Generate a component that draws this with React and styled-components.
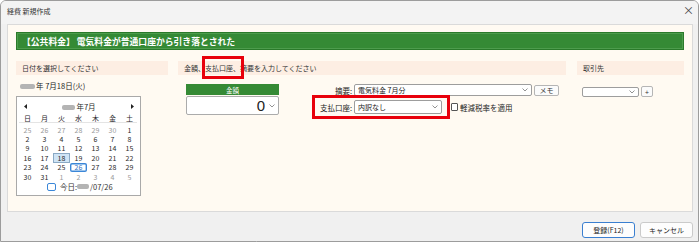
import React from 'react';
import styled, { createGlobalStyle } from 'styled-components';

const GlobalStyle = createGlobalStyle`
  html, body {
    margin: 0;
    padding: 0;
    background: #ffffff;
  }
  body {
    font-family: "Noto Sans CJK JP", "Noto Sans", sans-serif;
    color: #262626;
  }
  * {
    box-sizing: border-box;
  }
`;

const weekdays = ['日', '月', '火', '水', '木', '金', '土'];

const days = [
  [25, 26, 27, 28, 29, 30, 1],
  [2, 3, 4, 5, 6, 7, 8],
  [9, 10, 11, 12, 13, 14, 15],
  [16, 17, 18, 19, 20, 21, 22],
  [23, 24, 25, 26, 27, 28, 29],
  [30, 31, 1, 2, 3, 4, 5],
];

function Chevron() {
  return (
    <svg width="6" height="4" viewBox="0 0 6 4">
      <polyline points="0.5,0.5 3,3 5.5,0.5" fill="none" stroke="#777" strokeWidth="0.8" />
    </svg>
  );
}

function Arrow({ dir }) {
  return (
    <svg width="3" height="5" viewBox="0 0 3 5">
      {dir === 'left' ? <polygon points="3,0 0,2.5 3,5" fill="#222" /> : <polygon points="0,0 3,2.5 0,5" fill="#222" />}
    </svg>
  );
}

function Calendar() {
  return (
    <StCalendar>
      <StCalHead>
        <Arrow dir="left" />
        <span>
          <StBlur $w={13} />年7月
        </span>
        <Arrow dir="right" />
      </StCalHead>
      <StWeekRow>
        {weekdays.map((w) => (
          <StCell key={w}>{w}</StCell>
        ))}
      </StWeekRow>
      <StDays>
        {days.map((row, r) =>
          row.map((d, c) => {
            const other = (r === 0 && d > 20) || (r === 5 && d < 20);
            return (
              <StCell
                key={`${r}-${c}`}
                $muted={other}
                $selected={r === 3 && d === 18}
                $today={r === 4 && d === 26}
              >
                {d}
              </StCell>
            );
          })
        )}
      </StDays>
      <StToday>
        <StTodayMark />
        今日: <StBlur $w={12} />/07/26
      </StToday>
    </StCalendar>
  );
}

function App() {
  return (
    <>
      <GlobalStyle />
      <StWindow>
        <StTitleBar>
          <span>経費 新規作成</span>
          <StClose>×</StClose>
        </StTitleBar>

        <StPanel>
          <StBanner>【公共料金】 電気料金が普通口座から引き落とされた</StBanner>

          <StColumns>
            <StLeftCol>
              <StSection>日付を選択してください</StSection>
              <StDateText>
                <StBlur $w={15} />年 7月18日(火)
              </StDateText>
              <Calendar />
            </StLeftCol>

            <StMidCol>
              <StSection>
                金額、<StMark>支払口座、</StMark>摘要を入力してください
              </StSection>
              <StMidBody>
                <StAmount>
                  <StAmountLabel>金額</StAmountLabel>
                  <StAmountInput>
                    <span>0</span>
                    <Chevron />
                  </StAmountInput>
                </StAmount>

                <StForm>
                  <StRow>
                    <StLabel>摘要:</StLabel>
                    <StSelect $w={178} $h={12}>
                      <span>電気料金 7月分</span>
                      <Chevron />
                    </StSelect>
                    <StSmallButton $w={25}>メモ</StSmallButton>
                  </StRow>
                  <StRow>
                    <StBoxed>
                      <StLabel>支払口座:</StLabel>
                      <StSelect $w={88} $h={14}>
                        <span>内訳なし</span>
                        <Chevron />
                      </StSelect>
                    </StBoxed>
                    <StCheck />
                    <StCheckLabel>軽減税率を適用</StCheckLabel>
                  </StRow>
                </StForm>
              </StMidBody>
            </StMidCol>

            <StRightCol>
              <StSection>取引先</StSection>
              <StPartnerRow>
                <StSelect $w={57} $h={10}>
                  <span />
                  <Chevron />
                </StSelect>
                <StSmallButton $w={12}>+</StSmallButton>
              </StPartnerRow>
            </StRightCol>
          </StColumns>
        </StPanel>

        <StFooter>
          <StButton $primary>登録(F12)</StButton>
          <StButton>キャンセル</StButton>
        </StFooter>
      </StWindow>
    </>
  );
}

export default App;

const StWindow = styled.div`
  width: 699px;
  height: 242px;
  border: 1px solid #9c9c9c;
  border-radius: 6px 6px 0 0;
  background: #f0f0f0;
  display: flex;
  flex-direction: column;
  overflow: hidden;
`;

const StTitleBar = styled.div`
  height: 23px;
  background: #f3f3f3;
  display: flex;
  align-items: center;
  justify-content: space-between;
  padding: 0 4px 4px 6px;
  font-size: 7px;
  color: #333;
`;

const StClose = styled.span`
  font-size: 11px;
  color: #444;
  line-height: 1;
`;

const StPanel = styled.div`
  height: 188px;
  margin: 0 5px 0 6px;
  background: #fffaf2;
  border: 1px solid #dadada;
  padding: 7px 8px 0 8px;
`;

const StBanner = styled.div`
  height: 18px;
  background: #358a35;
  border: 1px solid #2a7a2a;
  box-shadow: inset 0 0 0 1px #4d9c4d;
  color: #ffffff;
  font-size: 8.8px;
  font-weight: bold;
  display: flex;
  align-items: center;
  padding-left: 5px;
`;

const StColumns = styled.div`
  display: flex;
  margin-top: 11px;
  gap: 10px;
`;

const StLeftCol = styled.div`
  width: 152px;
  display: flex;
  flex-direction: column;
`;

const StMidCol = styled.div`
  width: 388px;
  display: flex;
  flex-direction: column;
`;

const StRightCol = styled.div`
  width: 107px;
  margin-left: 1px;
  display: flex;
  flex-direction: column;
`;

const StSection = styled.div`
  height: 14px;
  line-height: 14px;
  background: #fdeee3;
  padding-left: 6px;
  font-size: 7px;
  color: #333;
  white-space: nowrap;
`;

const StMark = styled.span`
  position: relative;
  display: inline-block;
  line-height: 14px;

  &::after {
    content: '';
    position: absolute;
    top: -5px;
    bottom: -4px;
    left: -3px;
    right: -4px;
    border: 3px solid #e8000b;
  }
`;

const StBlur = styled.span`
  display: inline-block;
  width: ${(p) => p.$w}px;
  height: 5px;
  background: #b4b4b4;
  border-radius: 2px;
  filter: blur(0.7px);
  vertical-align: middle;
  margin-right: 1px;
`;

const StDateText = styled.div`
  margin-top: 6px;
  height: 10px;
  line-height: 10px;
  padding-left: 4px;
  font-size: 7.5px;
  color: #222;
`;

const StCalendar = styled.div`
  margin-top: 5px;
  width: 125px;
  height: 100px;
  background: #ffffff;
  border: 1px solid #a9a9a9;
  padding: 0 2px;
  font-size: 7px;
  color: #2a2a2a;
`;

const StCalHead = styled.div`
  height: 16px;
  display: flex;
  align-items: center;
  justify-content: space-between;
  padding: 2px 4px 0 5px;
  font-size: 7.5px;
`;

const StWeekRow = styled.div`
  display: grid;
  grid-template-columns: repeat(7, 17px);
  grid-auto-rows: 9px;
  height: 10px;
  border-bottom: 1px solid #e4e4e4;
  margin: 0 1px 2px 0;
`;

const StDays = styled.div`
  display: grid;
  grid-template-columns: repeat(7, 17px);
  grid-auto-rows: 9.4px;
`;

const StCell = styled.div`
  display: flex;
  align-items: center;
  justify-content: center;
  line-height: 8px;
  overflow: hidden;
  color: ${(p) => (p.$muted ? '#9a9a9a' : p.$today ? '#2f6fc0' : '#2a2a2a')};
  background: ${(p) => (p.$selected ? '#cfe4f5' : 'transparent')};
  box-shadow: ${(p) =>
    p.$selected ? 'inset 0 0 0 1px #8aa9c4' : p.$today ? 'inset 0 0 0 1.4px #3b87d8' : 'none'};
  border-radius: ${(p) => (p.$today ? '2px' : '0')};
`;

const StToday = styled.div`
  height: 11px;
  display: flex;
  align-items: center;
  padding-left: 28px;
  font-size: 7.5px;
  color: #333;
`;

const StTodayMark = styled.span`
  width: 9px;
  height: 8px;
  border: 1.4px solid #3b87d8;
  border-radius: 2px;
  margin-right: 4px;
`;

const StMidBody = styled.div`
  display: flex;
  align-items: flex-start;
  padding: 9px 0 0 8px;
`;

const StAmount = styled.div`
  width: 93px;
  display: flex;
  flex-direction: column;
`;

const StAmountLabel = styled.div`
  height: 11px;
  background: #358a35;
  color: #ffffff;
  font-size: 6.5px;
  display: flex;
  align-items: center;
  justify-content: center;
`;

const StAmountInput = styled.div`
  margin-top: 1px;
  height: 19px;
  background: #ffffff;
  border: 1px solid #ababab;
  border-radius: 2px;
  display: flex;
  align-items: center;
  justify-content: flex-end;
  gap: 4px;
  padding-right: 3px;
  font-size: 15px;
  font-family: "Liberation Sans", "Noto Sans", sans-serif;
  color: #222;
`;

const StForm = styled.div`
  margin-left: 33px;
  display: flex;
  flex-direction: column;
  gap: 4px;
`;

const StRow = styled.div`
  display: flex;
  align-items: center;
`;

const StBoxed = styled.div`
  position: relative;
  display: flex;
  align-items: center;

  &::after {
    content: '';
    position: absolute;
    top: -5px;
    bottom: -5px;
    left: 0;
    right: -8px;
    border: 3px solid #e8000b;
  }
`;

const StLabel = styled.div`
  width: 40px;
  margin-right: 2px;
  text-align: right;
  font-size: 7.5px;
  color: #222;
  white-space: nowrap;
`;

const StSelect = styled.div`
  width: ${(p) => p.$w}px;
  height: ${(p) => p.$h}px;
  background: #ffffff;
  border: 1px solid #9d9d9d;
  border-radius: 2px;
  display: flex;
  align-items: center;
  justify-content: space-between;
  padding: 0 3px 0 3px;
  font-size: 7px;
  color: #222;
`;

const StSmallButton = styled.div`
  width: ${(p) => p.$w}px;
  height: 11px;
  margin-left: 2px;
  background: #fbfbfb;
  border: 1px solid #b5b5b5;
  border-radius: 2px;
  display: flex;
  align-items: center;
  justify-content: center;
  font-size: 7px;
  color: #333;
`;

const StCheck = styled.span`
  width: 7px;
  height: 8px;
  margin-left: 9px;
  background: #ffffff;
  border: 1px solid #555;
  border-radius: 1px;
`;

const StCheckLabel = styled.span`
  margin-left: 2px;
  font-size: 7.5px;
  color: #222;
`;

const StPartnerRow = styled.div`
  display: flex;
  align-items: center;
  padding: 11px 0 0 5px;
`;

const StFooter = styled.div`
  flex: 1;
  display: flex;
  justify-content: flex-end;
  align-items: flex-start;
  gap: 5px;
  padding: 10px 5px 0 0;
`;

const StButton = styled.div`
  width: 53px;
  height: 16px;
  background: #fdfdfd;
  border: 1px solid ${(p) => (p.$primary ? '#3a7fd0' : '#cacaca')};
  border-radius: 3px;
  display: flex;
  align-items: center;
  justify-content: center;
  font-size: 7px;
  color: #222;
`;
